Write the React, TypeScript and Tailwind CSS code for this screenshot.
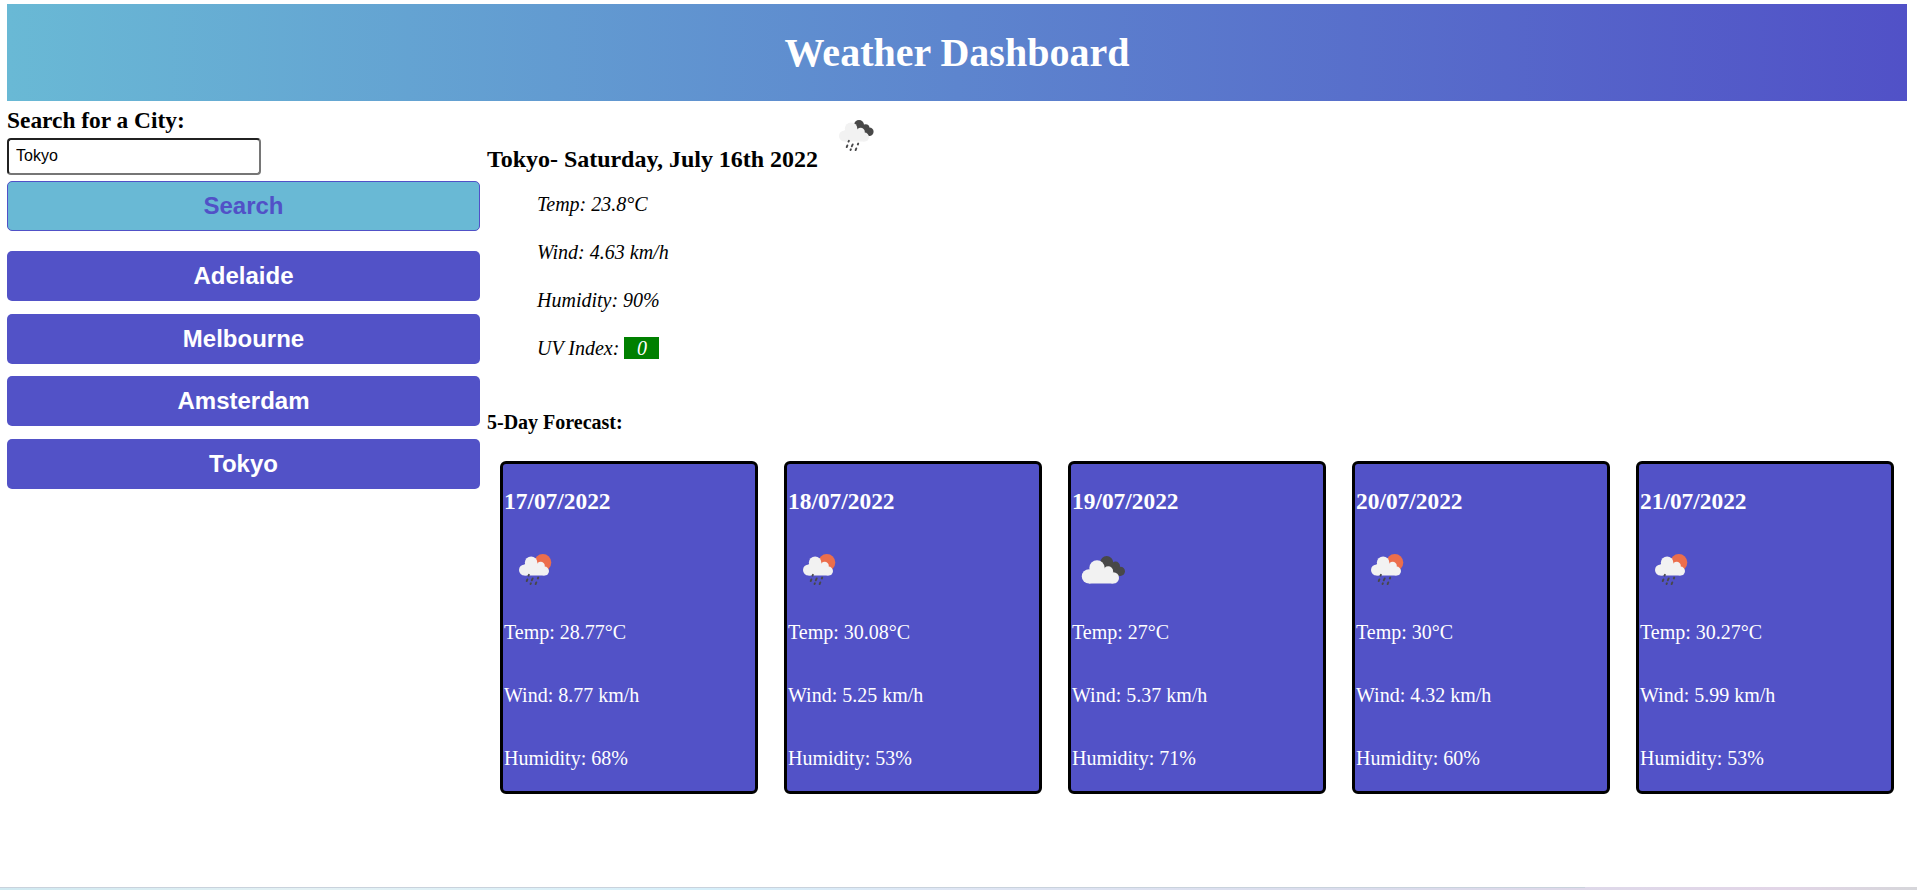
type IconKind = 'showers' | 'sunRain' | 'clouds';

const history = ['Adelaide', 'Melbourne', 'Amsterdam', 'Tokyo'];

const forecast: { date: string; icon: IconKind; temp: string; wind: string; humidity: string }[] = [
  { date: '17/07/2022', icon: 'sunRain', temp: '28.77', wind: '8.77', humidity: '68' },
  { date: '18/07/2022', icon: 'sunRain', temp: '30.08', wind: '5.25', humidity: '53' },
  { date: '19/07/2022', icon: 'clouds', temp: '27', wind: '5.37', humidity: '71' },
  { date: '20/07/2022', icon: 'sunRain', temp: '30', wind: '4.32', humidity: '60' },
  { date: '21/07/2022', icon: 'sunRain', temp: '30.27', wind: '5.99', humidity: '53' },
];

function WeatherIcon({ kind }: { kind: IconKind }) {
  if (kind === 'clouds') {
    return (
      <svg width="60" height="60" viewBox="0 0 60 60" className="block shrink-0">
        <g fill="#484848">
          <circle cx="34.7" cy="22.5" r="6.5" />
          <circle cx="43.6" cy="26" r="4.4" />
          <circle cx="48.4" cy="31.3" r="4.6" />
          <path d="M30 22 L42 23 L49 35.9 H40 Z" />
        </g>
        <g fill="#f2f2f2">
          <circle cx="17" cy="36.4" r="7.2" />
          <circle cx="25" cy="28" r="7.7" />
          <circle cx="36.2" cy="31.2" r="4.9" />
          <circle cx="41.3" cy="37.9" r="5.7" />
          <path d="M17 30 H38 L41.3 34 V43.6 H17 Z" />
        </g>
      </svg>
    );
  }
  return (
    <svg width="60" height="60" viewBox="0 0 60 60" className="block shrink-0">
      {kind === 'sunRain' ? (
        <circle cx="38.8" cy="22.4" r="8.5" fill="#ec6e4c" />
      ) : (
        <g fill="#484848">
          <circle cx="35" cy="19" r="5" />
          <circle cx="41.7" cy="22" r="3.7" />
          <circle cx="45.4" cy="25.8" r="4.2" />
          <path d="M32 18 L41 19 L46 29.9 H38 Z" />
        </g>
      )}
      <g fill="#f2f2f2">
        <circle cx="20.6" cy="30" r="5.6" />
        <circle cx="27.1" cy="22.7" r="6.3" />
        <circle cx="36.6" cy="26" r="4.2" />
        <circle cx="40.5" cy="31.1" r="4.5" />
        <path d="M20.6 24 H38 L40.5 27 V35.6 H20.6 Z" />
      </g>
      <g stroke="#48484a" strokeWidth="1.9" strokeLinecap="round">
        <path d="M24.9 34.8 L24.5 35.6" />
        <path d="M23.4 39.4 L22.7 41.1" />
        <path d="M28.7 38.4 L27.8 40.3" />
        <path d="M34.2 37.6 L33.8 38.5" />
        <path d="M26.9 43.3 L26.5 44" />
        <path d="M32.3 42.4 L31.6 44.1" />
      </g>
    </svg>
  );
}

export default function App() {
  return (
    <div className="flex h-[890px] w-full flex-col overflow-hidden bg-white font-['Liberation_Serif','Times_New_Roman',serif] text-[20px] text-black">
      <header className="mt-1 mr-[13px] ml-[7px] flex h-[97px] shrink-0 items-center justify-center bg-[linear-gradient(to_right,#69b9d5,#5151c7)]">
        <h1 className="text-[40px] leading-[48px] font-bold text-white">Weather Dashboard</h1>
      </header>

      <main className="mr-[13px] ml-[7px] flex grow">
        <aside className="flex w-[480px] shrink-0 flex-col pt-[6px] pr-[7px] font-['Liberation_Sans',Arial,sans-serif]">
          <label
            htmlFor="city"
            className="mb-[5px] block font-['Liberation_Serif','Times_New_Roman',serif] text-[23.4px] leading-[26px] font-bold"
          >
            Search for a City:
          </label>
          <input
            id="city"
            defaultValue="Tokyo"
            className="h-[37px] w-[254px] rounded-[4px] border-2 border-t-[#212121] border-r-[#767676] border-b-[#767676] border-l-[#212121] px-[7px] pb-px text-[16px] outline-none"
          />
          <button className="mt-[6px] h-[50px] rounded-[5px] border border-[#5151c7] bg-[#69b9d5] text-[24px] leading-none font-bold text-[#5151c7]">
            Search
          </button>
          <div className="mt-5 flex flex-col gap-[12.6px]">
            {history.map((city) => (
              <button
                key={city}
                className="h-[50px] rounded-[5px] bg-[#5252c7] text-[24px] leading-none font-bold text-white"
              >
                {city}
              </button>
            ))}
          </div>
        </aside>

        <section className="flex grow flex-col">
          <div className="flex h-[79px] items-start pt-[5px]">
            <h2 className="mt-[39px] w-[337px] text-[24px] leading-[28px] font-bold tracking-[-0.03px] whitespace-nowrap">
              Tokyo- Saturday, July 16th 2022
            </h2>
            <WeatherIcon kind="showers" />
          </div>
          <ul className="pl-[50px] leading-[48px] italic">
            <li>Temp: 23.8°C</li>
            <li>Wind: 4.63 km/h</li>
            <li>Humidity: 90%</li>
            <li>
              UV Index: <span className="bg-[#008000] px-[12.5px] text-white">0</span>
            </li>
          </ul>
          <h4 className="mt-[38px] text-[20px] leading-[24px] font-bold">5-Day Forecast:</h4>
          <div className="mt-[27px] grid h-[333px] grid-cols-5">
            {forecast.map((day) => (
              <article
                key={day.date}
                className="mx-[13px] flex flex-col rounded-[6px] border-[3px] border-black bg-[#5252c7] pl-px text-white"
              >
                <h3 className="mt-[24px] mb-[26px] text-[23.4px] leading-[26px] font-bold">{day.date}</h3>
                <WeatherIcon kind={day.icon} />
                <div className="mt-px leading-[63px]">
                  <p>Temp: {day.temp}°C</p>
                  <p>Wind: {day.wind} km/h</p>
                  <p>Humidity: {day.humidity}%</p>
                </div>
              </article>
            ))}
          </div>
        </section>
      </main>

      <div className="mr-[3px] flex h-[3px] shrink-0 flex-col bg-[linear-gradient(to_right,#d0e9f1,#e4f1f4_16%,#d6effa_37%,#dfe6f4_50%,#dadcec_72%,#e2d5e7_93%,#d6d6da)]">
        <div className="h-px w-[1585px] bg-[#c9d2dc]" />
      </div>
    </div>
  );
}
